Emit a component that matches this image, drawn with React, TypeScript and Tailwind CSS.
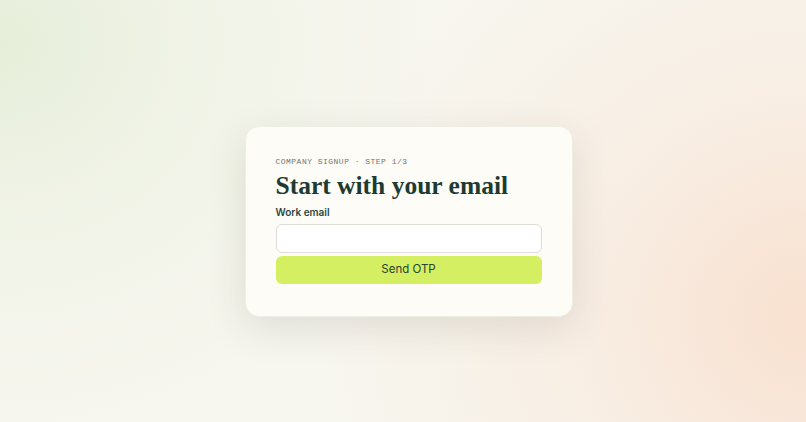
export default function App() {
  return (
    <div className="min-h-[422px] w-full flex items-center justify-center pl-[11px] pt-[21px] bg-[#f7f6ef] bg-[radial-gradient(ellipse_55%_95%_at_0%_10%,#e6eed9_0%,rgba(238,242,228,0.7)_45%,rgba(247,246,239,0)_100%),radial-gradient(ellipse_60%_110%_at_100%_75%,#f8e1d0_0%,rgba(249,234,222,0.6)_50%,rgba(247,246,239,0)_100%)]">
      <div className="w-[328px] rounded-[14px] bg-[#fdfcf6] border border-[#efeee6] px-[30px] pt-[29px] pb-[32px] shadow-[0_12px_40px_rgba(60,50,30,0.12)]">
        <div className="font-['Liberation_Mono',monospace] text-[8px] leading-[12px] tracking-[0.06em] text-[#74746d] uppercase">
          Company signup · Step 1/3
        </div>
        <h1 className="mt-[3px] font-['Liberation_Serif',serif] font-bold text-[25.5px] leading-[30px] text-[#1d3a33]">
          Start with your email
        </h1>
        <label className="block mt-[4px] font-['Inter',sans-serif] text-[10px] leading-[14px] font-semibold text-[#2e463f]">
          Work email
        </label>
        <input
          type="email"
          className="block mt-[5px] w-full h-[29px] rounded-[6px] border border-[#dedcd5] bg-white px-3 text-[12px] outline-none"
        />
        <button className="mt-[3px] w-full h-[28px] rounded-[6px] bg-[#d5ef62] font-['Inter',sans-serif] text-[11.5px] text-[#2a4333]">
          Send OTP
        </button>
      </div>
    </div>
  );
}
